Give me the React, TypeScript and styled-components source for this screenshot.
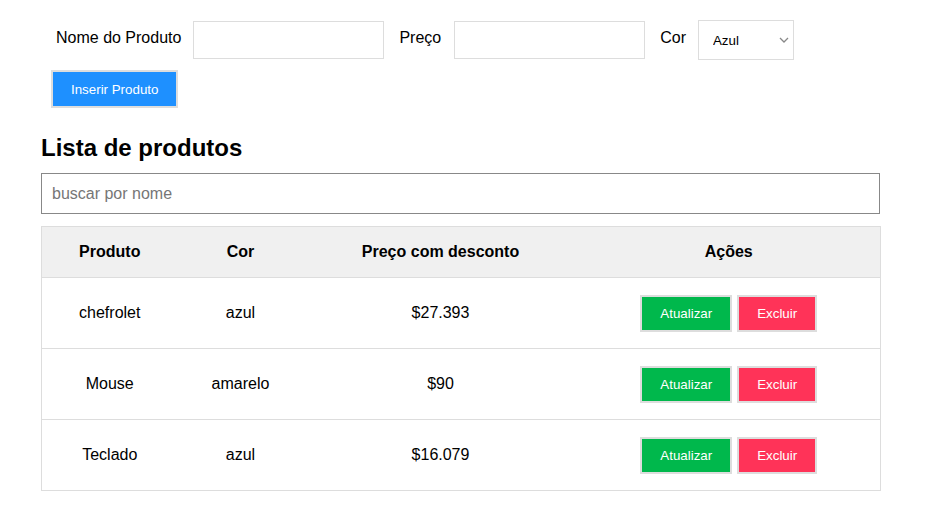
import React from "react";
import styled, { createGlobalStyle } from "styled-components";

const Global = createGlobalStyle`
  body {
    margin: 0;
    font-family: "Liberation Sans", Arial, sans-serif;
    background: #fff;
    color: #000;
  }
`;

const Page = styled.div`
  width: 839px;
  padding: 20px 0 0 41px;
`;

const FormRow = styled.div`
  display: flex;
  align-items: center;
  margin-left: 15px;
  height: 40px;
`;

const Label = styled.label<{ $gap?: number }>`
  font-size: 16px;
  margin-right: ${(p) => p.$gap ?? 14}px;
  margin-top: -4px;
`;

const TextInput = styled.input`
  box-sizing: border-box;
  width: 191px;
  height: 38px;
  border: 1px solid #ddd;
  margin-right: 15px;
  font-family: inherit;
  font-size: 16px;
  padding: 0 8px;
  outline: none;
`;

const SelectWrap = styled.div`
  position: relative;
  width: 96px;
  height: 40px;
`;

const Select = styled.select`
  box-sizing: border-box;
  width: 96px;
  height: 40px;
  border: 1px solid #ddd;
  border-radius: 0;
  background: #fff;
  font-family: inherit;
  font-size: 13.333px;
  padding: 0 8px 0 14px;
  color: #000;
  appearance: none;
  outline: none;
`;

const Chevron = styled.svg`
  position: absolute;
  right: 5px;
  top: 17px;
  pointer-events: none;
`;

const Button = styled.button<{ $bg: string }>`
  box-sizing: border-box;
  height: 37px;
  padding: 0 18px;
  border: 2px solid #ddd;
  background: ${(p) => p.$bg};
  color: #fff;
  font-family: inherit;
  font-size: 13.333px;
  cursor: pointer;
`;

const InsertButton = styled(Button)`
  height: 38px;
  margin: 10px 0 0 10px;
`;

const Title = styled.h2`
  font-size: 24px;
  font-weight: bold;
  margin: 26px 0 11px;
  line-height: 28px;
`;

const Search = styled.input`
  box-sizing: border-box;
  display: block;
  width: 839px;
  height: 41px;
  border: 1px solid #888;
  padding: 0 10px;
  font-family: inherit;
  font-size: 16px;
  outline: none;
  &::placeholder {
    color: #767676;
  }
`;

const Table = styled.table`
  width: 839px;
  margin-top: 12px;
  border-collapse: collapse;
  table-layout: fixed;
  border: 1px solid #ddd;
`;

const HeadRow = styled.tr`
  background: #f0f0f0;
  height: 51px;
`;

const Th = styled.th`
  font-size: 16px;
  font-weight: bold;
  text-align: center;
  padding: 0;
`;

const Row = styled.tr`
  height: 71px;
  border-top: 1px solid #ddd;
`;

const Td = styled.td`
  font-size: 16px;
  text-align: center;
  padding: 0;
`;

const Actions = styled.div`
  display: flex;
  justify-content: center;
  gap: 5px;
`;

const products = [
  { name: "chefrolet", color: "azul", price: "$27.393" },
  { name: "Mouse", color: "amarelo", price: "$90" },
  { name: "Teclado", color: "azul", price: "$16.079" },
];

export default function App() {
  return (
    <>
      <Global />
      <Page>
        <FormRow>
          <Label $gap={12}>Nome do Produto</Label>
          <TextInput />
          <Label $gap={13}>Preço</Label>
          <TextInput />
          <Label $gap={12}>Cor</Label>
          <SelectWrap>
            <Select defaultValue="azul">
              <option value="azul">Azul</option>
              <option value="amarelo">Amarelo</option>
            </Select>
            <Chevron width="10" height="6" viewBox="0 0 10 6">
              <path d="M1 1 L5 5 L9 1" fill="none" stroke="#888" strokeWidth="1.3" />
            </Chevron>
          </SelectWrap>
        </FormRow>
        <InsertButton $bg="#1e90ff">Inserir Produto</InsertButton>
        <Title>Lista de produtos</Title>
        <Search placeholder="buscar por nome" />
        <Table>
          <colgroup>
            <col style={{ width: 136 }} />
            <col style={{ width: 126 }} />
            <col style={{ width: 274 }} />
            <col style={{ width: 303 }} />
          </colgroup>
          <thead>
            <HeadRow>
              <Th>Produto</Th>
              <Th>Cor</Th>
              <Th>Preço com desconto</Th>
              <Th>Ações</Th>
            </HeadRow>
          </thead>
          <tbody>
            {products.map((p) => (
              <Row key={p.name}>
                <Td>{p.name}</Td>
                <Td>{p.color}</Td>
                <Td>{p.price}</Td>
                <Td>
                  <Actions>
                    <Button $bg="#00b84c">Atualizar</Button>
                    <Button $bg="#ff3358">Excluir</Button>
                  </Actions>
                </Td>
              </Row>
            ))}
          </tbody>
        </Table>
      </Page>
    </>
  );
}
